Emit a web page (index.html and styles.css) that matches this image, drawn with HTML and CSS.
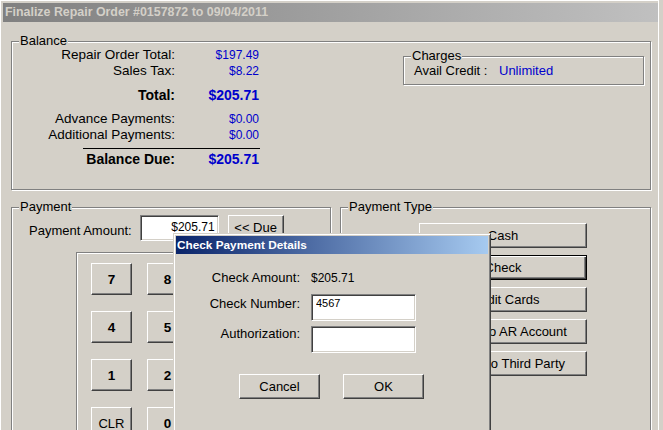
FILE: index.html
```html
<!DOCTYPE html>
<html lang="en">
  <head>
    <meta charset="UTF-8" />
    <meta name="viewport" content="width=device-width, initial-scale=1.0" />
    <title>Finalize Repair Order</title>
    <link rel="stylesheet" href="styles.css">
  </head>
  <body>
    <div class="window">
      <div class="titlebar inactive">Finalize Repair Order #0157872 to 09/04/2011</div>

      <div class="group balance">
        <span class="group-title">Balance</span>
        <div class="totals">
          <div class="row"><span class="label">Repair Order Total:</span><span class="value">$197.49</span></div>
          <div class="row"><span class="label">Sales Tax:</span><span class="value">$8.22</span></div>
          <div class="row strong spaced"><span class="label">Total:</span><span class="value">$205.71</span></div>
          <div class="row spaced"><span class="label">Advance Payments:</span><span class="value">$0.00</span></div>
          <div class="row"><span class="label">Additional Payments:</span><span class="value">$0.00</span></div>
          <div class="rule"></div>
          <div class="row strong"><span class="label">Balance Due:</span><span class="value">$205.71</span></div>
        </div>

        <div class="group charges">
          <span class="group-title">Charges</span>
          <div class="credit">
            <span class="credit-label">Avail Credit :</span>
            <span class="credit-value">Unlimited</span>
          </div>
        </div>
      </div>

      <div class="lower">
        <div class="group payment">
          <span class="group-title">Payment</span>
          <div class="amount-row">
            <span class="amount-label">Payment Amount:</span>
            <input class="field amount" type="text" value="$205.71">
            <button class="btn due">&lt;&lt; Due</button>
          </div>
          <div class="group keypad">
            <button class="btn key">7</button>
            <button class="btn key">8</button>
            <button class="btn key">9</button>
            <button class="btn key">4</button>
            <button class="btn key">5</button>
            <button class="btn key">6</button>
            <button class="btn key">1</button>
            <button class="btn key">2</button>
            <button class="btn key">3</button>
            <button class="btn key clr">CLR</button>
            <button class="btn key">0</button>
            <button class="btn key">.</button>
          </div>
        </div>

        <div class="group payment-type">
          <span class="group-title">Payment Type</span>
          <div class="type-buttons">
            <button class="btn type">Cash</button>
            <button class="btn type default">Check</button>
            <button class="btn type">Credit Cards</button>
            <button class="btn type">Charge to AR Account</button>
            <button class="btn type">Charge to Third Party</button>
          </div>
        </div>
      </div>

      <!-- modal dialog sits over the payment area -->
      <div class="dialog">
        <div class="titlebar active">Check Payment Details</div>
        <div class="dialog-body">
          <div class="detail-row first">
            <span class="detail-label">Check Amount:</span>
            <span class="detail-value">$205.71</span>
          </div>
          <div class="detail-row">
            <span class="detail-label">Check Number:</span>
            <input class="field detail-field" type="text" value="4567">
          </div>
          <div class="detail-row third">
            <span class="detail-label">Authorization:</span>
            <input class="field detail-field" type="text" value="">
          </div>
          <div class="dialog-buttons">
            <button class="btn dialog-btn">Cancel</button>
            <button class="btn dialog-btn">OK</button>
          </div>
        </div>
      </div>
    </div>
  </body>
</html>
```

FILE: styles.css
```css
body {
  margin: 0;
  background-color: #d4d0c8;
  font-family: "Liberation Sans", Arial, sans-serif;
  font-size: 13px;
  color: #000000;
}

.window {
  position: relative;
  width: 659px;
  height: 430px;
  box-sizing: border-box;
  overflow: hidden;
  border-top: 1px solid #ffffff;
  border-left: 1px solid #ffffff;
  border-right: 1px solid #ffffff;
}

.titlebar {
  font-weight: bold;
  white-space: nowrap;
}

.titlebar.inactive {
  margin: 2px 0 0 2px;
  width: 655px;
  height: 19px;
  line-height: 19px;
  padding-left: 2px;
  box-sizing: border-box;
  font-size: 12.4px;
  color: #d4d0c8;
  background: linear-gradient(to right, #808080, #c0c0c0);
}

.titlebar.active {
  height: 18px;
  line-height: 18px;
  padding-left: 1px;
  font-size: 11.8px;
  color: #ffffff;
  background: linear-gradient(to right, #0a246a, #a6caf0);
}

/* etched group box */
.group {
  position: relative;
  box-sizing: border-box;
  border: 1px solid #808080;
  box-shadow: 1px 1px 0 #ffffff, inset 1px 1px 0 #ffffff;
}

.group-title {
  position: absolute;
  top: -9px;
  left: 7px;
  padding: 0 1px;
  line-height: 15px;
  background-color: #d4d0c8;
  white-space: nowrap;
}

.balance {
  display: flex;
  margin: 19px 0 0 10px;
  width: 640px;
  height: 149px;
  padding-top: 5px;
}

.row {
  display: flex;
  height: 16px;
  line-height: 16px;
}

.row .label {
  width: 163px;
  text-align: right;
  font-size: 13.5px;
}

.row .value {
  width: 84px;
  text-align: right;
  font-size: 12px;
  color: #0000cc;
}

.row.strong .label,
.row.strong .value {
  font-size: 14px;
  font-weight: bold;
}

.row.spaced {
  margin-top: 8px;
}

.rule {
  margin: 5px 0 2px 71px;
  width: 177px;
  height: 1px;
  background-color: #000000;
}

.charges {
  align-self: flex-start;
  margin: 9px 6px 0 auto;
  width: 241px;
  height: 29px;
}

.credit {
  display: flex;
  padding: 6px 0 0 10px;
  line-height: 16px;
}

.credit-label {
  width: 85px;
}

.credit-value {
  color: #0000cc;
}

.lower {
  display: flex;
  margin: 17px 0 0 10px;
}

.payment {
  width: 320px;
  height: 240px;
}

.payment-type {
  margin-left: 9px;
  width: 311px;
  height: 240px;
}

.amount-row {
  display: flex;
  align-items: flex-start;
  padding: 7px 0 0 17px;
}

.amount-label {
  margin-top: 8px;
  line-height: 16px;
}

.field {
  box-sizing: border-box;
  margin: 0;
  border: 1px solid;
  border-color: #808080 #ffffff #ffffff #808080;
  box-shadow: inset 1px 1px 0 #404040, inset -1px -1px 0 #d4d0c8;
  background-color: #ffffff;
  font-family: "Liberation Sans", Arial, sans-serif;
  outline: none;
}

.amount {
  margin-left: 8px;
  width: 79px;
  height: 26px;
  padding: 0 3px 2px 0;
  text-align: right;
  font-size: 12px;
}

.btn {
  box-sizing: border-box;
  margin: 0;
  padding: 0;
  border: 1px solid;
  border-color: #ffffff #404040 #404040 #ffffff;
  box-shadow: inset -1px -1px 0 #808080;
  background-color: #d4d0c8;
  font-family: "Liberation Sans", Arial, sans-serif;
  font-size: 13px;
  color: #000000;
  white-space: nowrap;
}

.due {
  margin-left: 9px;
  width: 56px;
  height: 25px;
}

.keypad {
  display: grid;
  grid-template-columns: repeat(3, 41px);
  grid-auto-rows: 32px;
  column-gap: 15px;
  row-gap: 16px;
  margin: 11px 0 0 64px;
  width: 183px;
  height: 220px;
  padding: 10px 0 0 14px;
}

.key {
  font-weight: bold;
  font-size: 13.5px;
}

.key.clr {
  font-weight: normal;
  font-size: 13px;
}

.type-buttons {
  display: flex;
  flex-direction: column;
  gap: 7px;
  padding: 15px 0 0 78px;
}

.type {
  width: 168px;
  height: 25px;
}

.type.default {
  border-color: #000000;
  box-shadow: inset 1px 1px 0 #ffffff, inset -1px -1px 0 #404040, inset -2px -2px 0 #808080;
}

.dialog {
  position: absolute;
  left: 172px;
  top: 232px;
  width: 318px;
  height: 210px;
  box-sizing: border-box;
  padding: 2px;
  border: 1px solid;
  border-color: #d4d0c8 #404040 #404040 #d4d0c8;
  box-shadow: inset 1px 1px 0 #ffffff, inset -1px -1px 0 #808080;
  background-color: #d4d0c8;
}

.dialog-body {
  padding-top: 16px;
}

.detail-row {
  display: flex;
  align-items: flex-start;
  margin-top: 8px;
}

.detail-row.first {
  margin-top: 0;
}

.detail-row.third {
  margin-top: 5px;
}

.detail-label {
  width: 124px;
  margin-top: 2px;
  line-height: 16px;
  text-align: right;
}

.detail-row.first .detail-label,
.detail-row.third .detail-label {
  margin-top: 0;
}

.detail-value {
  margin-left: 11px;
  line-height: 16px;
  font-size: 12px;
}

.detail-field {
  margin-left: 11px;
  width: 105px;
  height: 27px;
  padding: 0 4px 9px 4px;
  font-size: 11px;
}

.dialog-buttons {
  display: flex;
  gap: 23px;
  padding: 21px 0 0 63px;
}

.dialog-btn {
  width: 81px;
  height: 25px;
}
```
